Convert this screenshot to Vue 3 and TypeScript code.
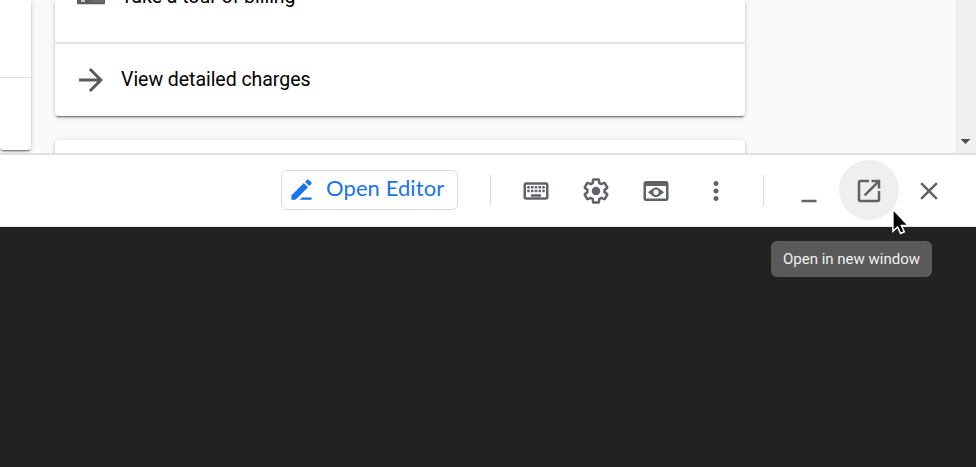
<script setup lang="ts">
interface ToolIcon {
  name: string
  path: string
}

const tools: ToolIcon[] = [
  {
    name: 'keyboard',
    path: 'M20 7v10H4V7h16m0-2H4c-1.100 0-2 .9-2 2v10c0 1.100.9 2 2 2h16c1.100 0 2-.9 2-2V7c0-1.100-.9-2-2-2zM11 8h2v2h-2zM11 11h2v2h-2zM8 8h2v2H8zM8 11h2v2H8zM5 11h2v2H5zM5 8h2v2H5zM8 14.500h8v2H8zM14 11h2v2h-2zM14 8h2v2h-2zM17 11h2v2h-2zM17 8h2v2h-2z',
  },
  {
    name: 'settings',
    path: 'M13.850 22.250h-3.700c-.74 0-1.360-.54-1.450-1.270l-.27-1.890c-.27-.14-.53-.29-.79-.46l-1.800.72c-.7.26-1.470-.03-1.810-.65L2.200 15.530c-.35-.66-.2-1.440.36-1.880l1.530-1.190c-.01-.15-.02-.3-.02-.46 0-.15.010-.31.020-.46l-1.520-1.190c-.59-.45-.74-1.260-.37-1.880l1.850-3.190c.34-.62 1.110-.9 1.790-.63l1.810.73c.26-.17.520-.32.780-.46l.27-1.910c.09-.7.710-1.250 1.440-1.250h3.700c.74 0 1.360.54 1.450 1.270l.27 1.890c.27.140.53.290.79.460l1.800-.72c.71-.26 1.480.03 1.820.65l1.840 3.180c.36.660.2 1.440-.36 1.880l-1.520 1.190c.01.150.020.300.020.460s-.01.310-.02.460l1.520 1.190c.56.450.72 1.230.37 1.860l-1.860 3.220c-.34.620-1.110.9-1.800.63l-1.800-.72c-.26.170-.52.320-.78.460l-.27 1.910c-.1.680-.72 1.220-1.460 1.220zm-3.230-2h2.760l.37-2.550.53-.22c.44-.18.880-.44 1.340-.78l.45-.34 2.380.96 1.380-2.400-2.030-1.580.07-.56c.03-.26.060-.51.060-.78s-.03-.53-.06-.78l-.07-.56 2.030-1.580-1.390-2.400-2.390.96-.45-.35c-.42-.32-.87-.58-1.330-.77l-.52-.22-.37-2.550h-2.760l-.37 2.550-.53.210c-.44.190-.88.440-1.340.79l-.45.330-2.380-.95-1.390 2.390 2.030 1.580-.07.560a7 7 0 0 0-.06.790c0 .260.020.530.060.780l.07.560-2.030 1.580 1.380 2.400 2.390-.96.450.350c.43.330.86.580 1.330.770l.53.220zM15.400 12a3.400 3.400 0 1 1-6.800 0a3.400 3.400 0 0 1 6.800 0z',
  },
  {
    name: 'preview',
    path: 'M20 4H4c-1.110 0-2 .9-2 2v12c0 1.100.89 2 2 2h16c1.100 0 2-.9 2-2V6c0-1.100-.89-2-2-2zm0 14H4V8h16zM12 9.100c-1 0-1.700.4-2.500.9L5.600 13l3.900 3c.8.5 1.500.9 2.500.9s1.700-.4 2.500-.9l3.900-3-3.900-3c-.8-.5-1.500-.9-2.500-.9zm0 6.100a2.100 2.200 0 1 1 0-4.400a2.100 2.200 0 0 1 0 4.400z',
  },
  {
    name: 'more',
    path: 'M12 8c1.100 0 2-.9 2-2s-.9-2-2-2-2 .9-2 2 .9 2 2 2zm0 2c-1.100 0-2 .9-2 2s.9 2 2 2 2-.9 2-2-.9-2-2-2zm0 6c-1.100 0-2 .9-2 2s.9 2 2 2 2-.9 2-2-.9-2-2-2z',
  },
]

const windowControls: ToolIcon[] = [
  { name: 'minimize', path: 'M6 19h12v2H6z' },
  {
    name: 'open-new',
    path: 'M19 19H5V5h7V3H5c-1.110 0-2 .9-2 2v14c0 1.100.89 2 2 2h14c1.100 0 2-.9 2-2v-7h-2v7zM14 3v2h3.590l-9.830 9.830 1.410 1.410L19 6.410V10h2V3h-7z',
  },
  {
    name: 'close',
    path: 'M19 6.410L17.590 5 12 10.590 6.410 5 5 6.410 10.590 12 5 17.590 6.410 19 12 13.410 17.590 19 19 17.590 13.410 12z',
  },
]
</script>

<template>
  <div class="screen">
    <main class="content">
      <div class="side-column">
        <section class="card side-card">
          <div class="side-body"></div>
          <div class="side-footer"></div>
        </section>
      </div>
      <div class="main-column">
        <section class="card billing-card">
          <div class="row tour-row">
            <svg class="row-icon" viewBox="0 0 36 36">
              <path d="M4 4h28v20a1.200 1.200 0 0 1-1.200 1.200H5.200A1.200 1.200 0 0 1 4 24z" />
              <path class="icon-soft" d="M18 4h13v19.500H18z" />
              <path class="icon-light" d="M8 20h4v3H8z" />
            </svg>
            <span class="row-label">Take a tour of billing</span>
          </div>
          <div class="row charges-row">
            <svg class="row-icon" viewBox="0 0 24 24">
              <path d="M12 4l-1.410 1.410L16.170 11H4v2h12.170l-5.580 5.590L12 20l8-8z" />
            </svg>
            <span class="row-label">View detailed charges</span>
          </div>
        </section>
        <section class="card next-card"></section>
      </div>
      <div class="scrollbar"><span class="scroll-arrow"></span></div>
    </main>

    <header class="toolbar">
      <button class="editor-button">
        <svg class="pencil" viewBox="0 0 24 24">
          <path d="M3 17.250V21h3.750L17.810 9.940l-3.750-3.750zM20.710 7.040a1 1 0 0 0 0-1.410l-2.340-2.340a1 1 0 0 0-1.410 0l-1.830 1.830 3.750 3.750zM12.300 19H21v2H10.500z" />
        </svg>
        <span class="editor-label">Open Editor</span>
      </button>
      <span class="separator"></span>
      <nav class="tools">
        <button v-for="tool in tools" :key="tool.name" class="icon-button">
          <svg class="icon" viewBox="0 0 24 24"><path :d="tool.path" /></svg>
        </button>
      </nav>
      <span class="separator"></span>
      <nav class="controls">
        <button v-for="item in windowControls" :key="item.name" class="icon-button" :class="item.name">
          <svg class="icon" viewBox="0 0 24 24"><path :d="item.path" /></svg>
        </button>
      </nav>
    </header>

    <section class="terminal"></section>

    <div class="tooltip">Open in new window</div>
    <svg class="cursor" viewBox="0 0 20 28">
      <path d="M1.900 2.200v22l4.700-4.300 3 6.500 3.700-1.600-3-6.300h6.900z" />
    </svg>
  </div>
</template>

<style>
body {
  margin: 0;
  overflow: hidden;
}
</style>

<style scoped>
.screen {
  position: relative;
  display: flex;
  flex-direction: column;
  width: 976px;
  height: 467px;
  overflow: hidden;
  font-family: Roboto, "Liberation Sans", sans-serif;
}

.content {
  display: flex;
  flex: none;
  height: 153px;
  overflow: hidden;
  background: #fafafa;
  border-bottom: 2px solid #e0e0e0;
}

.side-column {
  flex: none;
  width: 31px;
  margin-right: 24px;
}

.main-column {
  flex: none;
  width: 690px;
}

.card {
  display: flex;
  flex-direction: column;
  box-sizing: border-box;
  background: #fff;
  border-radius: 0 0 3px 3px;
  box-shadow: 0 2px 2px -1px rgba(0, 0, 0, 0.55), 0 1px 5px rgba(0, 0, 0, 0.2);
}

.side-card {
  height: 150px;
}

.side-body {
  height: 77px;
  border-bottom: 1px solid #e0e0e0;
}

.billing-card {
  height: 116px;
  margin-bottom: 24px;
}

.next-card {
  height: 40px;
  border-radius: 3px 3px 0 0;
}

.row {
  display: flex;
  flex: none;
  align-items: center;
  padding-left: 18px;
  gap: 12px;
}

.tour-row {
  height: 90px;
  margin-top: -48px;
  border-bottom: 2px solid #e4e4e4;
}

.charges-row {
  height: 72px;
}

.row-icon {
  flex: none;
  width: 36px;
  height: 36px;
  fill: #5c5c5c;
}

.icon-soft {
  fill: #6c6c6c;
}

.icon-light {
  fill: #c4c4c4;
}

.row-label {
  color: #000;
  font-size: 19.5px;
  letter-spacing: -0.04px;
  line-height: 24px;
  white-space: nowrap;
}

.scrollbar {
  display: flex;
  flex: none;
  align-items: flex-end;
  justify-content: center;
  box-sizing: border-box;
  width: 21px;
  margin-left: auto;
  padding-bottom: 9px;
  background: #f0f0f0;
}

.scroll-arrow {
  width: 10px;
  height: 5px;
  background: #505050;
  clip-path: polygon(0 0, 100% 0, 50% 100%);
}

.toolbar {
  display: flex;
  flex: none;
  align-items: flex-start;
  box-sizing: border-box;
  height: 72px;
  padding: 5px 17px 0 281px;
  background: #fff;
  border-bottom: 1px solid #e4e6e8;
}

button {
  margin: 0;
  padding: 0;
  background: none;
  border: 0;
}

.editor-button {
  display: flex;
  flex: none;
  align-items: center;
  box-sizing: border-box;
  width: 177px;
  height: 40px;
  margin-top: 10px;
  padding: 0 0 1px 6px;
  gap: 11px;
  border: 1px solid #dadce0;
  border-radius: 6px;
}

.pencil {
  flex: none;
  width: 27px;
  height: 27px;
  fill: #1a73e8;
}

.editor-label {
  margin-bottom: 3px;
  color: #1a73e8;
  font-family: Lato, "Open Sans", sans-serif;
  font-size: 22px;
  letter-spacing: 0.08px;
  line-height: 26px;
  white-space: nowrap;
}

.separator {
  flex: none;
  width: 1px;
  height: 31px;
  margin-top: 15px;
  background: #dadce0;
}

.editor-button + .separator {
  margin-left: 32px;
}

.tools,
.controls {
  display: flex;
  flex: none;
}

.tools {
  margin: 0 17px 0 15px;
}

.controls {
  margin-left: 15px;
}

.icon-button {
  display: flex;
  flex: none;
  justify-content: center;
  box-sizing: border-box;
  width: 60px;
  height: 60px;
  padding-top: 16px;
  border-radius: 50%;
}

.open-new {
  background: #efefef;
}

.icon {
  width: 30px;
  height: 30px;
  fill: #5f6368;
}

.terminal {
  flex: 1;
  background: #222;
}

.tooltip {
  position: absolute;
  top: 241px;
  left: 771px;
  box-sizing: border-box;
  width: 161px;
  height: 36px;
  background: #5a5a5a;
  border-radius: 6px;
  color: #f1f1f1;
  font-size: 15px;
  line-height: 36px;
  text-align: center;
  white-space: nowrap;
}

.cursor {
  position: absolute;
  top: 207px;
  left: 891px;
  width: 20px;
  height: 28px;
  fill: #000;
  stroke: #fff;
  stroke-width: 1.5;
}
</style>
